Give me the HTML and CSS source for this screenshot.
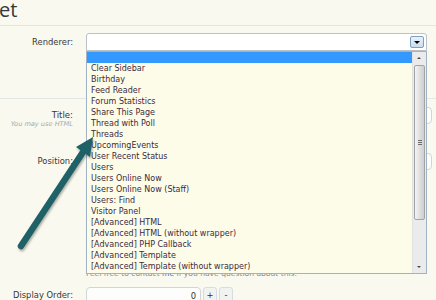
FILE: index.html
```html
<!DOCTYPE html>
<html lang="en">
<head>
  <meta charset="UTF-8">
  <title>Create New Widget</title>
  <link rel="stylesheet" href="styles.css">
</head>
<body>
  <div class="page">
    <h1 class="heading">et</h1>

    <form class="form">
      <div class="unit renderer">
        <label class="label">Renderer:</label>
        <div class="control">
          <div class="select">
            <span class="value"></span>
            <span class="dropBtn"><span class="tri"></span></span>
          </div>
        </div>
      </div>

      <div class="unit title">
        <div class="label">
          <label>Title:</label>
          <span class="hint">You may use HTML</span>
        </div>
        <div class="control"><div class="input"></div></div>
      </div>

      <div class="unit position">
        <label class="label">Position:</label>
        <div class="control"><div class="input"></div></div>
      </div>

      <div class="unit note">
        <div class="label"></div>
        <p class="explain">Feel free to contact <a href="#">me</a> if you have question about this.</p>
      </div>

      <div class="unit order">
        <label class="label">Display Order:</label>
        <div class="control spin">
          <div class="input num">0</div>
          <span class="spinBtn">+</span>
          <span class="spinBtn">-</span>
        </div>
      </div>
    </form>

    <!-- the open list of the renderer select -->
    <div class="optList">
      <ul class="options">
        <li class="option highlight">&nbsp;</li>
        <li class="option">Clear Sidebar</li>
        <li class="option">Birthday</li>
        <li class="option">Feed Reader</li>
        <li class="option">Forum Statistics</li>
        <li class="option">Share This Page</li>
        <li class="option">Thread with Poll</li>
        <li class="option">Threads</li>
        <li class="option">UpcomingEvents</li>
        <li class="option">User Recent Status</li>
        <li class="option">Users</li>
        <li class="option">Users Online Now</li>
        <li class="option">Users Online Now (Staff)</li>
        <li class="option">Users: Find</li>
        <li class="option">Visitor Panel</li>
        <li class="option">[Advanced] HTML</li>
        <li class="option">[Advanced] HTML (without wrapper)</li>
        <li class="option">[Advanced] PHP Callback</li>
        <li class="option">[Advanced] Template</li>
        <li class="option">[Advanced] Template (without wrapper)</li>
      </ul>
      <div class="scrollbar">
        <span class="sbBtn up"></span>
        <span class="thumb"><span class="grip"></span></span>
        <span class="track"></span>
        <span class="sbBtn down"></span>
      </div>
    </div>

    <svg class="pointer" width="436" height="300" viewBox="0 0 436 300">
      <line x1="21" y1="246" x2="85" y2="149" stroke="#1e6166" stroke-width="6.5" stroke-linecap="round"/>
      <polygon points="93,137 76,147 90,157" fill="#1e6166"/>
    </svg>
  </div>
</body>
</html>
```

FILE: styles.css
```css
html, body {
  margin: 0;
  height: 100%;
}
body {
  background: #f9f9ef;
  font-family: "DejaVu Sans", Verdana, sans-serif;
  color: #3c3434;
  overflow: hidden;
}
.page {
  position: relative;
  width: 436px;
  height: 300px;
  overflow: hidden;
}
.heading {
  margin: 0;
  height: 25px;
  font-family: "Open Sans", "Liberation Sans", sans-serif;
  font-size: 20px;
  font-weight: normal;
  line-height: 20px;
  color: #2e3a40;
  border-bottom: 1px solid #dde7e4;
  text-indent: -1px;
}

.form {
  margin: 0;
}
.unit {
  display: grid;
  grid-template-columns: 73px 1fr;
  column-gap: 13px;
}
.label {
  text-align: right;
  font-size: 8.4px;
  line-height: 11px;
  color: #3c3434;
}
.control {
  padding-right: 4px;
}

.renderer {
  padding-top: 7px;
  height: 65px;
  border-bottom: 1px solid #e1e8e6;
}
.renderer .label {
  padding-top: 4px;
}
.select {
  position: relative;
  box-sizing: border-box;
  width: 341px;
  height: 18px;
  border: 1px solid #b9c2c8;
  border-radius: 3px 3px 0 0;
  background: #ffffff;
}
.dropBtn {
  position: absolute;
  top: 2px;
  right: 2px;
  box-sizing: border-box;
  width: 14px;
  height: 12px;
  border: 1px solid #7f9fbf;
  border-radius: 2px;
  background: linear-gradient(#e9f2fb, #c9dcef);
}
.dropBtn .tri {
  position: absolute;
  left: 3px;
  top: 4px;
  border-left: 3px solid transparent;
  border-right: 3px solid transparent;
  border-top: 3px solid #000;
}

.title {
  margin-top: 8px;
  height: 37px;
}
.title .label {
  padding-top: 3px;
}
.title .label label {
  display: block;
  font-size: 8.6px;
}
.hint {
  display: block;
  margin-top: -1px;
  font-size: 6.6px;
  line-height: 8px;
  font-style: italic;
  color: #a8a8a8;
}
.input {
  box-sizing: border-box;
  height: 17px;
  border: 1px solid #cfd6da;
  border-radius: 4px;
  background: #fdfdfb;
}

.position {
  margin-top: 9px;
}
.position .label {
  padding-top: 3px;
}

.note {
  margin-top: 99px;
}
.explain {
  margin: 0;
  font-size: 7.6px;
  line-height: 10px;
  color: #8c8c8c;
}
.explain a {
  color: #3b6fa8;
  text-decoration: none;
}

.order {
  margin-top: 8px;
}
.order .label {
  padding-top: 3px;
}
.spin {
  display: flex;
  gap: 2px;
}
.input.num {
  width: 115px;
  height: 16px;
  padding-right: 4px;
  text-align: right;
  font-size: 8.4px;
  line-height: 16px;
  color: #333;
}
.spinBtn {
  box-sizing: border-box;
  width: 14px;
  height: 16px;
  border: 1px solid #d6dcdf;
  border-radius: 3px;
  background: #f1f3f1;
  text-align: center;
  font-size: 8.4px;
  line-height: 14px;
  color: #333;
}

/* open dropdown list */
.optList {
  position: absolute;
  left: 86px;
  top: 51px;
  box-sizing: border-box;
  width: 341px;
  height: 223px;
  display: flex;
  border: 1px solid #9fb3c6;
  background: #fcfce9;
}
.options {
  flex: 1;
  margin: 0;
  padding: 0;
  list-style: none;
}
.option {
  height: 11px;
  padding-left: 4px;
  font-size: 8px;
  line-height: 11px;
  color: #3d2a3d;
  white-space: nowrap;
}
.option.highlight {
  background: #3399ff;
}
.scrollbar {
  width: 13px;
  display: flex;
  flex-direction: column;
  background: #ebebeb;
  border-left: 1px solid #e2e2e2;
}
.sbBtn {
  position: relative;
  height: 12px;
}
.sbBtn:after {
  content: "";
  position: absolute;
  left: 4px;
  border-left: 2.5px solid transparent;
  border-right: 2.5px solid transparent;
}
.sbBtn.up:after {
  top: 5px;
  border-bottom: 2.5px solid #4a4a4a;
}
.sbBtn.down:after {
  top: 5px;
  border-top: 2.5px solid #4a4a4a;
}
.thumb {
  position: relative;
  height: 155px;
  margin: 1px 1px 0;
  box-sizing: border-box;
  border: 1px solid #a3a3a3;
  border-radius: 2px;
  background: linear-gradient(90deg, #f4f4f4, #dcdcdc 60%, #cfcfcf);
}
.grip {
  position: absolute;
  left: 3px;
  top: 74px;
  width: 4px;
  height: 5px;
  background: repeating-linear-gradient(#6d6d6d 0 1px, transparent 1px 2px);
}
.track {
  flex: 1;
}

.pointer {
  position: absolute;
  left: 0;
  top: 0;
  pointer-events: none;
  filter: drop-shadow(1px 2px 1px rgba(0,0,0,.3));
}
```
